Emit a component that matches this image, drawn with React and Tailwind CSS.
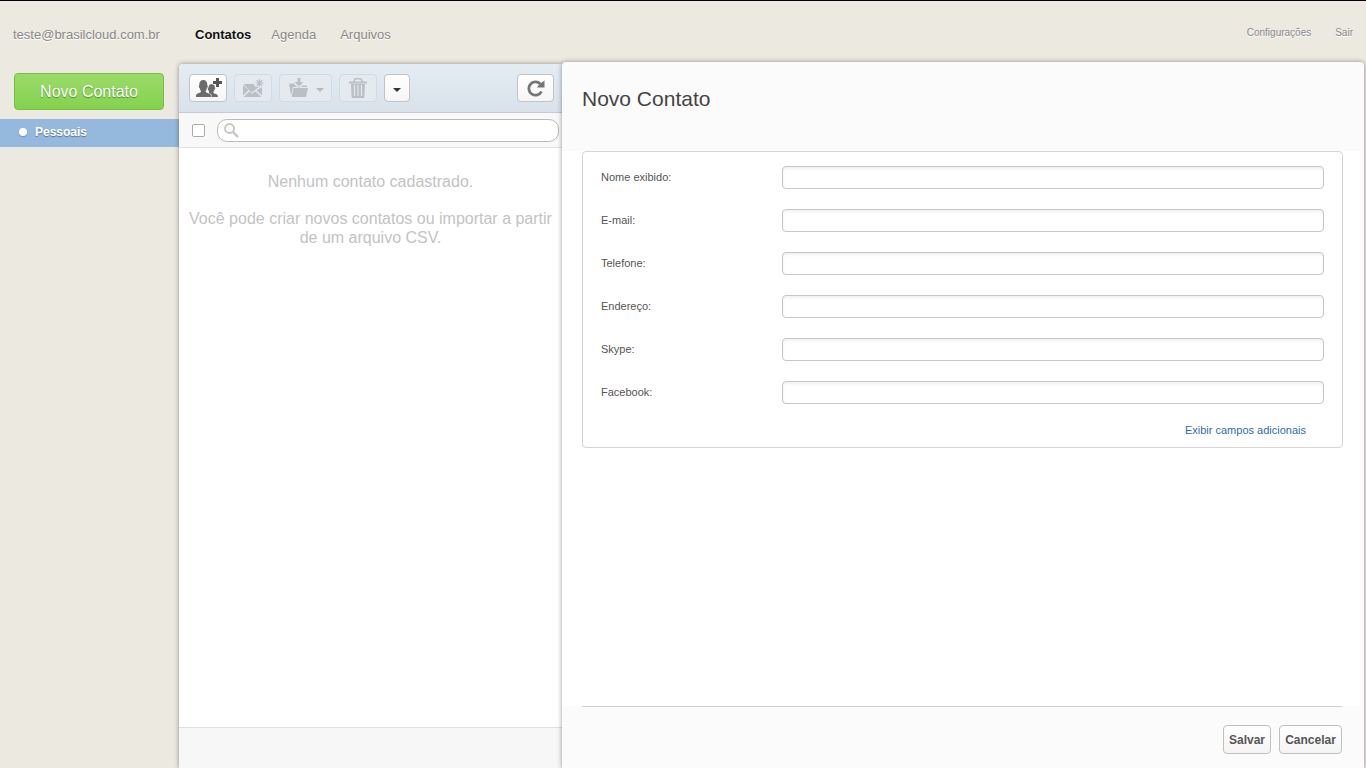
import React, { useState } from 'react';

const fields = [
  { id: 'name', label: 'Nome exibido:', type: 'text' },
  { id: 'email', label: 'E-mail:', type: 'email' },
  { id: 'phone', label: 'Telefone:', type: 'tel' },
  { id: 'address', label: 'Endereço:', type: 'text' },
  { id: 'skype', label: 'Skype:', type: 'text' },
  { id: 'facebook', label: 'Facebook:', type: 'text' },
];

const AddContactIcon = () => (
  <svg width="28" height="22" viewBox="0 0 28 22" fill="#6b6b6b" aria-hidden="true">
    <path d="M14.500 10.500c0-2.200 1.400-3.500 3.300-3.500s3.300 1.300 3 3.600q.6.200.4 1-.2.900-.8 1.100-.3 1.300-1 2-.2 1.100.4 1.500l2.200.9q1.600.6 1.800 1.700V20H15v-5.500q-.6-.7-.7-1.800-.6-.4-.6-1.200.1-.8.800-1z" />
    <path
      d="M2 20v-1.800q.3-1.200 1.600-1.700l2.600-1q1-.5.700-1.600-1-1.300-1.200-2.900-.8-.3-.9-1.500-.1-.8.500-1C5.100 4.900 6.600 3 9.300 3s4.200 1.900 4 5.500q.6.200.5 1-.2 1.200-.9 1.500-.2 1.600-1.200 2.900-.3 1.100.7 1.600l2.600 1q1.700.6 1.900 1.700V20z"
      stroke="#fafafa"
      strokeWidth="1.200"
      paintOrder="stroke"
    />
    <path d="M22 1h3v3h3v3h-3v3h-3V7h-3V4h3z" fill="#555" stroke="#fafafa" strokeWidth="1.200" paintOrder="stroke" />
  </svg>
);

const MailIcon = () => (
  <svg width="22" height="20" viewBox="0 0 22 20" fill="#babfc6" aria-hidden="true">
    <path d="M1 7l5.500 5L1 17.500zM1.500 6H12l1 2.500 4 .5-7.500 5.700zM20 9v8.500l-5.500-5zM1.500 19l5.700-5.600 2.500 2.400 3.600-2.600 6 5.800z" />
    <path d="M17.500 1v8M13.500 5h8M14.700 2.200l5.600 5.600M20.300 2.200l-5.600 5.600" stroke="#babfc6" strokeWidth="1.200" />
  </svg>
);

const MoveIcon = () => (
  <svg width="22" height="20" viewBox="0 0 22 20" fill="#babfc6" aria-hidden="true">
    <path d="M9.500 0h3v4h3L11 8.500 6.500 4h3z" />
    <path d="M1 5.500h5l1.500 2L11 10l3.500-2.500H19V9H5L3 17.500z" />
    <path d="M5.500 10H20l-2 9H3.700z" />
  </svg>
);

const TrashIcon = () => (
  <svg width="20" height="20" viewBox="0 0 20 20" fill="#babfc6" aria-hidden="true">
    <path fillRule="evenodd" d="M6.500 0h7L15 3.500h4v2H1v-2h4zM7.500 1.500l-.8 2h6.600l-.8-2z" />
    <path d="M3 6h14l-.6 13a1 1 0 0 1-1 1H4.600a1 1 0 0 1-1-1z" />
    <path d="M6.500 7v11M10 7v11M13.500 7v11" stroke="#e3e8ee" strokeWidth="1.200" />
  </svg>
);

const RefreshIcon = () => (
  <svg width="18" height="18" viewBox="0 0 18 18" fill="none" aria-hidden="true">
    <path d="M13.200 4.800A6.650 6.650 0 1 0 14.500 12.500" stroke="#757575" strokeWidth="2.800" />
    <path d="M17.500 1.500v7h-7.500l2-3z" fill="#757575" />
  </svg>
);

const SearchIcon = () => (
  <svg width="16" height="16" viewBox="0 0 16 16" fill="none" stroke="#c4c4c4" aria-hidden="true">
    <circle cx="5.500" cy="6.500" r="4.500" strokeWidth="1.800" />
    <path d="M9 10l5 5" strokeWidth="2.400" />
  </svg>
);

const Caret = ({ color }) => (
  <svg width="8" height="8" viewBox="0 0 8 8" fill={color} aria-hidden="true">
    <path d="M0 4h8L4 8z" />
  </svg>
);

const ToolButton = ({ label, disabled, className, children }) => (
  <button
    type="button"
    aria-label={label}
    disabled={disabled}
    className={`h-7 flex items-center justify-center rounded border ${
      disabled ? 'border-[#d3dae2] bg-[#e5eaf0]' : 'border-[#c3c3c3] bg-linear-to-b from-white to-[#f5f5f5]'
    } ${className}`}
  >
    {children}
  </button>
);

const Header = () => (
  <header className="h-[62px] shrink-0 border-t border-black bg-linear-to-b from-[#f3e6e4] to-[#ece9e0] to-10% flex items-center pt-1.5 text-[13px] text-[#888] [text-shadow:0_1px_0_#fff]">
    <span className="w-[195px] pl-[13px]">teste@brasilcloud.com.br</span>
    <nav className="flex gap-5">
      <a href="#contatos" className="font-bold text-[#111]">Contatos</a>
      <a href="#agenda">Agenda</a>
      <a href="#arquivos" className="pl-1">Arquivos</a>
    </nav>
    <nav className="ml-auto pr-[13px] pb-1 flex gap-6 text-[10px]">
      <a href="#configuracoes">Configurações</a>
      <a href="#sair">Sair</a>
    </nav>
  </header>
);

const Sidebar = () => (
  <aside className="w-[179px] shrink-0 pt-[11px]">
    <button
      type="button"
      className="ml-3.5 w-[150px] h-[37px] rounded border border-[#76bd43] bg-linear-to-b from-[#9bdb68] to-[#84d24e] text-base text-white [text-shadow:0_1px_1px_#4f8a2a]"
    >
      Novo Contato
    </button>
    <a
      href="#pessoais"
      className="mt-[9px] h-7 pl-[19px] pb-0.5 flex items-center gap-2 bg-[#95b9dc] text-xs font-bold text-white [text-shadow:0_1px_1px_#54728f]"
    >
      <span className="size-2 rounded-full bg-white shadow-[0_1px_1px_#6d8fb0]" />
      Pessoais
    </a>
  </aside>
);

const ContactList = () => (
  <section className="w-[383px] shrink-0 mt-0.5 flex flex-col rounded-tl bg-white shadow-[0_0_5px_rgba(0,0,0,0.4)]">
    <div className="h-[49px] pl-2.5 pr-2 flex items-center gap-[7px] rounded-tl border-b border-[#c3cad4] bg-linear-to-b from-[#e4ecf4] to-[#d9e1ea]">
      <ToolButton label="Adicionar contato" className="w-[38px]">
        <AddContactIcon />
      </ToolButton>
      <ToolButton label="Enviar mensagem" disabled className="w-[38px]">
        <MailIcon />
      </ToolButton>
      <ToolButton label="Mover para" disabled className="w-[53px] gap-1.5">
        <MoveIcon />
        <Caret color="#b4b9c0" />
      </ToolButton>
      <ToolButton label="Excluir" disabled className="w-[38px]">
        <TrashIcon />
      </ToolButton>
      <ToolButton label="Mais opções" className="w-[26px]">
        <Caret color="#333" />
      </ToolButton>
      <ToolButton label="Atualizar" className="w-[37px] ml-auto">
        <RefreshIcon />
      </ToolButton>
    </div>

    <div className="h-[35px] pl-[13px] pr-[3px] flex items-center gap-3 border-b border-[#dfdfdf] bg-[#f8f8f8]">
      <input
        type="checkbox"
        aria-label="Selecionar todos"
        className="appearance-none size-[13px] rounded-xs border border-[#aaa] bg-white checked:bg-[#95b9dc]"
      />
      <label className="flex-1 h-[23px] px-1.5 flex items-center gap-1 rounded-[10px] border border-[#bbb] bg-white">
        <SearchIcon />
        <input type="search" aria-label="Buscar contatos" className="flex-1 min-w-0 text-xs text-[#555] outline-none" />
      </label>
    </div>

    <div className="flex-1 px-1 pt-6 text-center text-base leading-[19px] text-[#c3c3c3]">
      <p>Nenhum contato cadastrado.</p>
      <p className="mt-[18px]">Você pode criar novos contatos ou importar a partir de um arquivo CSV.</p>
    </div>

    <div className="h-[41px] border-t border-[#dedede] bg-[#f7f7f7]" />
  </section>
);

const ContactForm = () => {
  const [values, setValues] = useState({});

  const changeHandler = (e) => {
    setValues({ ...values, [e.target.name]: e.target.value });
  };

  return (
    <form
      onSubmit={(e) => e.preventDefault()}
      className="relative flex-1 min-w-0 mr-0.5 flex flex-col rounded-t bg-[#fbfbfb] shadow-[0_0_5px_rgba(0,0,0,0.4)]"
    >
      <h1 className="h-[89px] px-5 pt-6 text-[21px] leading-[26px] text-[#444]">Novo Contato</h1>

      <div className="flex-1 mr-1 pl-5 pr-[17px] bg-white">
        <div className="px-[18px] pt-3.5 pb-2 rounded border border-[#d5d5d5] text-[11px] text-[#555]">
          <div className="flex flex-col gap-5">
            {fields.map((field) => (
              <div key={field.id} className="flex items-center">
                <label htmlFor={field.id} className="w-[181px]">{field.label}</label>
                <input
                  id={field.id}
                  name={field.id}
                  type={field.type}
                  value={values[field.id] || ''}
                  onChange={changeHandler}
                  className="flex-1 min-w-0 h-[23px] px-1.5 rounded border border-[#c6c6c6] bg-white shadow-[inset_0_2px_3px_rgba(0,0,0,0.06)] outline-none focus:border-[#95b9dc]"
                />
              </div>
            ))}
          </div>
          <div className="mt-[18px] pr-[18px] text-right">
            <a href="#campos" className="text-[#3069b5]">Exibir campos adicionais</a>
          </div>
        </div>
      </div>

      <div className="ml-5 mr-[22px] h-[62px] pt-[18px] flex items-start justify-end gap-2 border-t border-[#d3d3d3] text-xs font-bold text-[#555]">
        <button type="submit" className="h-[29px] w-12 rounded border border-[#c0c0c0] bg-linear-to-b from-white to-[#f4f4f4]">
          Salvar
        </button>
        <button type="button" className="h-[29px] w-[63px] rounded border border-[#c0c0c0] bg-linear-to-b from-white to-[#f4f4f4]">
          Cancelar
        </button>
      </div>
    </form>
  );
};

const App = () => {
  return (
    <div className="min-h-screen flex flex-col overflow-hidden bg-[#ece9e0] font-['Liberation_Sans',Arial,sans-serif]">
      <Header />
      <main className="flex-1 flex">
        <Sidebar />
        <ContactList />
        <ContactForm />
      </main>
    </div>
  );
};

export default App;
